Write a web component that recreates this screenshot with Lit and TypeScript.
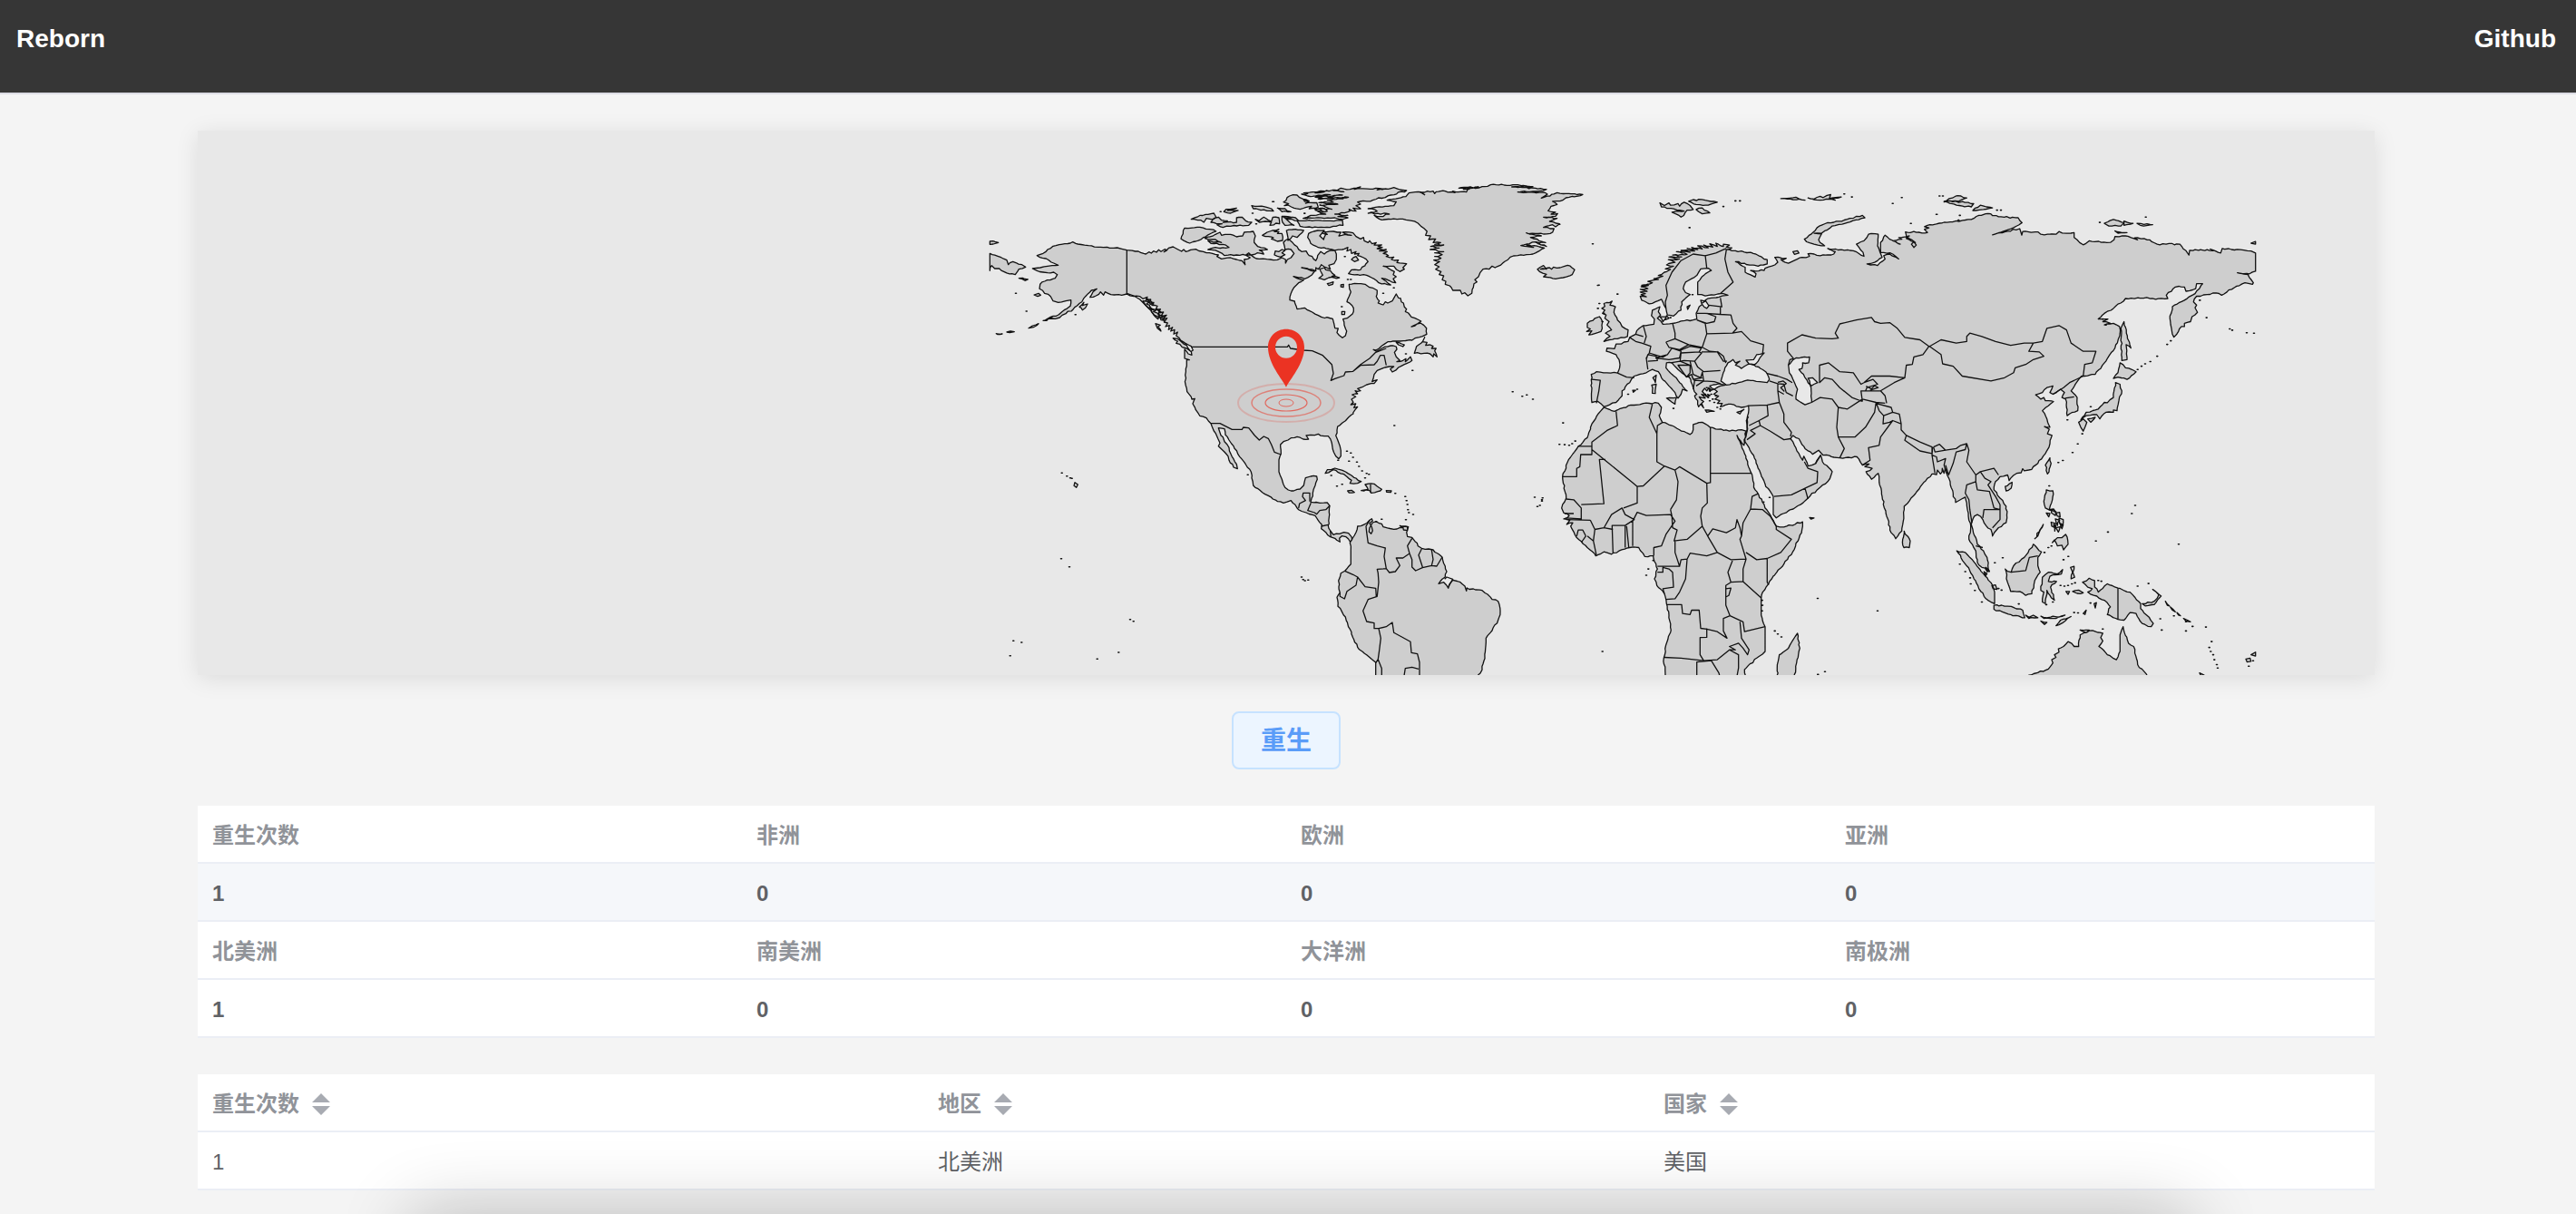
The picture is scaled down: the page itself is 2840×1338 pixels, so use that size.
import { LitElement, html, svg, css } from "lit";
import { customElement, state } from "lit/decorators.js";

/* ---------- Map data ---------- */

// The map is digitised in five sheets; each has an origin on the map and a scale per axis.
type Sheet = [number, number, number, number];
const SHEETS: Record<string, Sheet> = {
  nw: [862, 36, 3, 3],
  n: [1182, 36, 3, 3],
  sw: [1062, 276, 3, 3],
  e: [1482, 36, 3, 2.751],
  fe: [1882, 36, 3, 2.751],
};

// A trace is a list of x,y pairs; a sheet name switches the sheet for the pairs after it.
const LANDS: string[] = [
  // North and Central America
  `nw 190,305 210,298 225,285 243,274 270,268 300,264 308,260 325,267 360,272 400,277 430,280 455,279 470,283 487,287 515,291 550,300 560,293 568,297 575,290 585,294 592,286 600,292 612,284 618,286 610,293 625,280 640,276 655,284 668,291 675,285 682,292 690,290 698,286 715,284 740,292 770,298 790,303 785,308 800,316 830,312 850,318 868,322 878,335 875,318 895,312 880,304 890,296 898,304 915,315 950,317 985,319 1000,312 1012,318 1012,330 1018,318 1030,312 1040,298 1030,285 1010,285 1005,262 1020,250 1035,262 1050,275 1065,292 1080,290 1090,305 1100,308 1112,322 1118,305 1128,292 1140,300 1155,290 1175,288 1180,300 1180,318 1172,332 1155,337 1160,350 1140,342 1130,335 1120,350 1112,345 1112,356 1085,348 1065,345 1085,350 1108,357 1098,370 1075,382 1055,378 1038,374 1060,384 1072,386 1055,395 1040,410 1030,430 1026,452 1042,456 1050,482 1075,478 1100,492 1130,508 1168,514 1172,530
   n 215,545 226,546 222,560 240,577 250,570 254,555 246,535 242,515 265,505 277,490 272,470 255,458 262,440 268,425 262,400 280,397 315,400 340,412 355,420 352,440 362,455 358,462 375,468 382,458 390,462 405,455 418,432 425,445 432,446 435,458 442,462 445,475 452,482 448,490 458,495 468,508 480,512 500,522 488,530 468,540 498,528 518,545 519,565 505,572 480,578 470,585 430,588 390,590 370,604 350,618 342,616 352,622 370,612 400,603 418,606 420,615 412,625 418,640 430,652 420,656 440,652 450,646 448,656 465,640 470,652 445,665 425,675 405,690 398,680 410,672 395,672 380,675 355,685 345,698 342,712 338,722 355,716 345,728 335,728 320,732 305,740 290,745 300,752 282,752 290,762 272,765 284,772 270,780 276,790 268,798 284,795 278,808 290,805 282,815 275,825
   sw 636,108 620,120 600,138 584,150 578,180 588,205 595,230 595,248 588,257 578,248 568,225 565,205 553,182 540,182 520,175 495,178 480,180 488,192 470,192 450,184 430,188 420,195 405,200 395,210 397,240 390,260 390,300 400,325 410,352 430,363 460,357 472,345 478,320 495,315 515,315 517,325 510,345 502,370 498,388 495,400 525,403 550,402 558,412 556,450 553,478 560,495 570,508 590,505 605,500 620,503 630,515 632,524 626,532 612,515 598,512 590,520 592,532 575,520 560,515 545,500 530,488 532,475 510,445 480,435 455,425 430,395 405,403 370,390 335,368 305,345 300,320 298,300 280,275 260,250 240,215 225,195 213,178 210,158 190,155 195,170 205,185 210,200 225,220 235,250 250,275 253,290 240,285 225,262 215,240 200,225 190,215 195,205 188,190 175,165 165,140
   nw 750,842 728,835 715,815 705,795 712,778 702,780 700,772 686,755 682,735 680,700 685,670 685,650 694,650 678,645 678,615 690,630 702,634 700,622 706,618 700,605 690,600 665,585 650,570 655,558 642,565 645,550 632,555 638,542 625,550 628,536 615,540 622,528 610,525 620,512 606,515 618,502 600,505 608,492 592,495 598,482 582,484 588,472 570,470 576,460 562,462 566,450 550,452 555,442 540,448 530,440 510,440 487,432 470,436 445,435 425,430 415,425 410,436 400,425 385,438 365,443 375,425 388,415 370,420 350,440 338,458 310,482 285,497 265,510 240,513 215,520 235,508 262,500 280,485 300,472 302,452 285,455 260,460 243,455 235,440 215,430 198,415 200,400 215,390 250,380 257,368 245,360 225,362 210,360 190,355 175,348 200,345 225,340 240,338 260,337 245,330 220,315`,
  // South America
  `sw 632,522 640,510 650,480 670,475 690,460 697,455 700,462 690,470 697,482 700,495 695,505 688,498 690,485 700,468 712,464 730,472 735,482 770,490 800,485 790,478 818,482 812,500 815,514 830,517 840,530 850,545 862,553 885,555 900,558 915,570 930,582 940,612 945,630 940,648 930,655 918,670 935,665 950,685 955,670 965,658 990,665 1005,678 1010,694 1012,684 1040,690 1062,692 1080,705 1095,722 1115,728 1122,760 1115,790 1095,825 1075,850 1073,885 1068,925 1062,955 1045,980 710,980 710,930 680,905 650,880 638,855 625,820 610,780 585,745 582,715 592,700 588,680 587,660 595,635 608,628 628,605 628,560 625,535`,
  // Greenland and Iceland
  `n 325,150 350,145 410,140 418,127 388,122 450,110 460,98 500,95 512,104 495,95 540,92 545,100 550,94 580,92 612,97 605,92 650,95 655,85 625,82 690,78 640,86 720,76 730,71 820,71 870,77 800,78 915,86 880,93 820,95 910,97 918,102 898,115 950,97 1035,103 990,112 960,125 935,126 950,136 930,142 920,157 945,162 930,168 952,166 945,175 905,178 950,182 925,192 958,200 945,210 935,203 905,212 940,216 935,228 905,234 848,230 898,240 885,240 862,245 912,262 880,262 915,275 880,260 830,272 872,278 845,268 908,280 870,300 820,305 795,310 770,330 745,345 735,340 725,350 705,350 695,362 690,375 678,385 685,392 675,398 668,430 655,438 645,428 635,432 630,420 605,420 595,405 580,400 582,390 570,385 575,372 560,368 566,358 548,350 560,342 545,335 562,325 542,320 566,314 545,308 570,302 545,296 575,292 530,285 560,280 532,275 575,270 545,268 565,262 540,262 548,250 525,252 532,240 515,238 520,225 510,215 490,198 470,190 430,184 370,187 345,172 365,176 395,168 325,165 355,158`,
  `n 885,350 905,338 915,350 895,350 925,345 932,350 938,343 960,345 985,337 1008,352 1000,368 970,378 945,382 905,375 915,367 892,358`,
  // Canadian Arctic
  `nw 678,214 720,211 760,218 782,225 740,245 715,258 695,264 666,250`,
  `nw 745,248 780,235 795,228 800,238 830,235 850,243 870,240 875,228 905,225 912,240 908,262 920,275 952,285 925,287 940,300 918,296 900,303 850,303 810,305 790,292 755,285 780,278 825,278 805,268 765,265 755,256 800,262 780,252`,
  `nw 700,185 730,172 775,165 782,178 765,185 750,182 742,195 732,188`,
  `nw 765,195 775,182 790,178 800,188 820,190 805,195 850,195 850,180 868,178 880,190 900,195 890,205 830,208 805,212 785,203 802,200`,
  `nw 815,152 850,148 820,156 855,156 830,165 808,160`,
  `nw 900,140 940,143 965,150 972,158 930,155 905,150`,
  `nw 912,185 925,190 940,178 955,188 965,192 970,178 990,180 992,200 980,198 960,205 965,195 945,192 925,195`,
  `nw 985,148 1010,150 1030,160 1000,160`,
  `nw 935,238 960,225 990,218 975,226 990,226 985,232 1000,232 1002,255 985,258 965,250 972,246 945,242`,
  `nw 1015,222 1045,218 1072,222 1050,245 1035,240 1020,255`,
  `nw 1000,175 1038,178 1012,182 1020,190 1040,205 1010,205 1002,195`,
  `nw 978,290 990,292 1000,285 1010,288 1000,296 1010,302 995,310 975,303`,
  `n 45,128 65,108 90,105 110,118 130,125 118,132 155,130 160,145 130,150 138,142 118,146 100,152 80,148 60,138 48,140 62,134`,
  `n 105,102 125,100 112,98 140,95 180,92 150,98 215,88 245,94 210,90 235,82 265,86 300,78 280,86 350,82 390,85 355,88 410,80 452,90 400,105 340,122 290,128 300,135 285,140 300,150 275,148 285,158 262,152 265,158 215,168 258,172 225,176 258,180 240,186 215,180 180,182 110,182 135,172 185,168 150,155 175,160 160,150 205,152 165,138 225,135 162,130 210,128 190,122 260,112 160,118 240,105 150,112 200,104 125,108`,
  `n 45,178 85,180 95,190 130,188 200,190 240,188 242,205 180,212 130,210 100,208 90,190 60,185`,
  `n 125,245 128,232 145,225 180,222 165,240 178,252 185,235 172,230 190,235 178,226 210,225 235,228 228,240 250,235 270,238 240,228 275,230 285,242 300,250 310,245 312,256 325,262 330,256 338,266 352,262 345,270 370,270 358,275 372,278 355,282 385,285 362,290 388,292 375,298 392,305 385,308 410,310 402,318 425,320 420,328 452,332 440,345 445,350 430,358 410,340 375,340 400,352 412,358 408,368 418,375 408,382 416,395 395,388 370,380 400,402 360,395 320,370 290,368 260,365 270,352 300,352 325,325 310,312 290,305 295,298 280,300 285,292 270,298 268,285 255,290 258,278 240,285 205,285 160,278 135,265`,
  `n 165,350 180,345 185,352 200,355 215,370 205,374 230,378 195,378 180,385 162,380 175,370`,
  `n 190,398 210,392 208,400 195,404`,
  `n 235,402 244,400 243,410 235,408`,
  `n 270,318 285,308 293,320 280,325`,
  `n 238,490 248,490 247,500 238,500`,
  `n 512,575 505,590 520,592 515,602 530,600 540,605 535,612 550,612 545,620 553,640 542,630 540,640 530,630 510,628 478,628 485,605 500,595`,
  `n 418,592 445,600 440,606 425,600`,
  `n 110,118 125,124 115,126`,
  `n 148,150 175,148 190,158 160,160`,
  // North Pacific
  `nw 640,578 655,580 665,588 685,602 690,612 698,622 685,612 670,608 662,598 650,595 655,588`,
  `nw 582,530 598,535 590,540 600,555 588,545`,
  `nw 540,455 560,460 552,465 575,485 560,480 548,468`,
  `nw 562,475 585,485 575,490 595,500 590,515 575,500`,
  `nw 590,500 612,505 600,510 612,520 600,518`,
  `nw 585,480 605,495 595,492`,
  `nw 550,445 575,465 565,466`,
  `nw 330,475 345,460 340,470 357,465 350,478 340,485 336,478`,
  `nw 162,545 175,537 195,530 178,542`,
  `nw 210,520 228,512 240,508 222,520`,
  `nw 90,558 102,555 115,557 100,560`,
  `nw 55,563 75,564 60,566`,
  `nw 34,298 60,307 90,320 95,335 110,325 140,335 152,343 130,350 118,368 80,358 65,348 50,348 40,338 34,355`,
  `nw 34,258 62,262 45,267 34,268`,
  `nw 130,380 160,384 150,388`,
  `nw 180,435 195,430 202,436 192,440`,
  `nw 315,1055 325,1062 320,1072 312,1066`,
  // Caribbean
  `sw 543,305 550,293 575,288 600,295 630,312 662,332 650,338 625,338 630,328 605,308 570,293`,
  `sw 662,362 685,358 675,342 705,340 715,348 730,358 725,363 695,370 690,362`,
  `sw 617,363 630,361 640,368 622,369`,
  `sw 745,362 762,363 760,368 746,367`,
  `sw 800,480 815,482 815,494 802,492`,
  // Eurasia
  `e 163,640 180,632 215,635 250,636 258,610 255,595 245,580 213,570 215,560 240,562 245,548 262,548 285,540 290,528 310,518 322,500 335,492 355,490 370,488 372,472 362,462 365,445 390,435 385,450 392,460 382,470 400,488 432,485 460,478 500,475 512,472 510,455 520,435 530,428 545,440 552,432 540,415 560,408 615,400 600,395 540,402 515,398 515,360 535,340 560,325 550,318 525,320 512,340 475,360 467,380 475,392 490,398 462,420 460,445 445,455 435,463 415,460 410,440 395,412 375,420 355,426 330,415 325,403 345,405 328,398 342,395 325,390 348,388 325,382 350,380 328,374 352,370 330,370 365,362 350,358 385,352 370,350 400,342 385,340 405,330 425,322 408,320 435,312 412,308 440,300 418,292 455,290 420,284 462,284 432,278 480,276 445,268 490,270 460,264 505,266 480,258 515,262 495,255 530,260 515,250 550,256 535,248 565,254 555,244 580,252 575,242 600,252 600,245 620,248 610,254 628,256 610,262 640,265 690,270 745,292 745,305 715,312 640,298 672,315 672,330 690,338 705,345 708,335 690,325 735,325 738,318 770,308 780,300 770,285 808,288 790,292 815,303 860,285 885,282 880,274 900,275 920,280 965,275 970,268 945,258 990,262 1030,265 1065,282 1062,270 1040,245 1065,235 1080,215 1112,215 1110,250 1118,270 1125,285 1100,300 1075,305 1110,310 1135,290 1130,280 1150,275 1180,290 1160,275 1120,270 1120,240 1135,218 1150,230 1185,245 1160,235 1190,230 1180,225 1215,220 1205,228 1235,240 1205,225 1202,208 1275,210
   fe 70,205 65,200 80,196 65,192 75,188 150,178 220,170 245,158 275,152 310,162 375,165 388,180 360,195 290,217 330,208 380,198 387,218 390,207 440,208 450,215 500,215 510,207 535,212 560,210 560,225 570,232 590,247 610,235 650,240 680,240 692,232 695,222 730,220 770,232 760,226 810,232 835,245 910,245 930,265 940,278 942,264 960,262 1020,265 1010,260 1045,272 1050,258 1110,262 1145,266 1160,272 1160,327 1140,335 1100,332 1135,337 1145,352 1153,362 1150,367 1125,362 1090,377 1048,400 1030,393 1000,398 965,403 955,420 965,430 960,438 968,452 950,465 945,480 925,485 925,495 915,495 905,510 890,527 882,500 877,470 885,435 925,415 960,395 985,365 965,365 962,380 930,388 925,375 895,375 865,400 870,410 830,412 800,407 730,410 690,440 660,455 640,472 672,472 655,480 680,485 660,490 690,485 710,495 712,515 695,560 665,600 630,640 595,645 585,645 570,662 550,690 570,710 572,750 537,765 535,740 532,715 520,710 528,695 515,685 490,700 480,695 490,675 470,680 455,695 433,702 450,715 460,710 465,720 492,722 475,735 455,750 470,775 480,800 462,798 478,806 472,820 487,825 480,850 465,880 440,910 420,928 395,932 390,926 385,938 370,940 350,955 345,962 340,945 315,950 300,965 295,990 315,1015 335,1040 338,1075 335,1090 305,1110 290,1130 285,1110 270,1100 258,1080 240,1065 230,1070 220,1095 225,1110 235,1135 240,1155 260,1175 272,1195 275,1220 280,1238 255,1225 240,1210 235,1175 212,1140 218,1100 210,1060 205,1030 200,1012 180,1022 168,1028 160,1000 150,965 140,945 134,925 130,940 124,925 118,942 108,930 105,944 95,942
   e 1290,942 1275,955 1240,995 1210,1030 1198,1040 1195,1085 1190,1115 1170,1138 1155,1120 1140,1070 1125,1010 1115,960 1112,940 1090,958 1072,935 1092,925 1068,920 1082,912 1060,915 1042,890 985,893 930,885 915,870 895,882 870,865 850,835 830,825 822,835 835,855 850,880 862,900 866,888 880,918 905,910 922,885 928,905 960,935 945,965 910,990 880,1015 855,1035 775,1075 765,1065 765,1010 740,980 715,925 700,885 680,855 672,845 678,800 680,765 683,735 660,740 625,730 590,738 596,728 580,728 588,720 572,715 584,706 568,700 580,692 570,685 590,675 607,672 585,668 555,675 570,685 560,688 552,680 545,690 538,682 530,692 545,705 528,700 540,712 520,708 535,722 528,728 535,742 525,730 518,738 515,720 505,705 512,700 500,680 492,655 470,640 450,625 430,605 412,605 410,620 430,640 455,665 480,690 465,685 460,700 450,712 440,695 420,675 395,650 385,632 365,625 345,635 305,645 290,665 265,690 265,705 245,725 205,738 185,722 165,725`,
  // Africa and Madagascar
  `e 205,740 240,752 285,735 335,728 385,727 395,740 388,765 398,785 430,795 455,808 490,822 500,808 500,792 530,785 555,800 620,812 660,808 675,812 668,855 650,835 645,825 670,880 690,935 705,990 735,1035 760,1075 775,1100 800,1103 862,1087 860,1110 835,1170 800,1215 760,1260 730,1300 725,1320 725,1370 738,1405 738,1480 710,1500 670,1535 675,1580 410,1580 403,1500 410,1460 427,1415 420,1370 412,1335 405,1305 380,1280 372,1260 382,1230 368,1190 340,1192 320,1165 290,1165 230,1185 205,1178 178,1190 150,1165 115,1135 95,1100 102,1090 82,1095 92,1082 72,1078 90,1068 72,1060 65,1045 80,1015 68,950 85,905 120,858 150,832 165,790 200,745`,
  `e 845,1425 853,1470 835,1550 828,1580 780,1580 778,1530 785,1490 815,1470 830,1445`,
  `e 1198,1115 1218,1145 1215,1165 1197,1165 1193,1140`,
  `e 885,1074 900,1075 890,1079`,
  // Europe, islands
  `e 205,425 232,418 225,430 243,435 238,452 250,475 265,495 285,505 283,525 250,532 205,540 225,525 210,515 230,505 215,490 222,480 208,470 212,460 200,455 208,445 198,440 208,434`,
  `e 150,485 175,470 190,465 200,480 195,510 155,520 165,508 148,510 160,502 150,498`,
  `e 412,712 445,710 440,730`,
  `e 363,672 378,670 375,698 365,697`,
  `e 367,650 378,642 375,665`,
  `e 540,748 570,752 545,755`,
  `e 645,755 668,746 655,760`,
  `e 390,465 412,465 400,480`,
  `e 412,462 420,470 408,474`,
  `e 480,435 490,430 482,443`,
  `e 525,415 540,418 528,425`,
  `e 300,688 310,688 302,694`,
  `e 552,684 560,686 556,692`,
  `e 548,700 556,704 550,706`,
  `e 536,698 548,708 542,706`,
  // Arctic Russia and Svalbard
  `e 390,120 405,128 420,120 425,127 450,122 455,130 470,118 490,128 500,140 480,142 460,163 430,148 470,145 455,142 395,132`,
  `e 485,115 500,110 540,112 580,118 550,127 510,125`,
  `e 510,140 530,135 555,150 530,153`,
  `e 790,107 840,103 870,112 850,108 830,110`,
  `e 880,105 900,108 920,100 930,104 955,95 950,108 990,102 960,108 970,112 940,108 920,112`,
  `e 868,230 890,215 910,195 945,180 1000,172 1060,158 1068,165 1010,180 960,190 925,212 900,212 925,214 915,232 935,250 900,245 875,238`,
  `e 830,268 845,265 850,272 835,276`,
  `fe 130,115 175,98 205,105 185,112 130,117 150,114 228,122 220,132 180,128`,
  `fe 225,143 250,127 290,135 260,140`,
  `fe 660,182 690,170 725,180 715,190 675,190`,
  `fe 725,175 755,182 725,188`,
  `fe 768,182 820,186 790,190`,
  `fe 695,205 735,210 705,212`,
  `fe 1145,242 1160,237 1160,245`,
  `fe 22,245 30,238 38,248 30,255`,
  // East Asia
  `fe 715,500 725,480 733,515 748,560 732,550 735,595 718,598`,
  `fe 712,605 730,620 765,632 735,655 705,648 690,652 705,635`,
  `fe 697,665 712,670 718,690 708,720 702,750 690,748 690,755 665,755 645,775 635,762 600,765 582,778 600,755 640,745 660,725 670,726 690,710`,
  `fe 575,785 590,775 602,785 596,800 590,812 582,800`,
  `fe 605,775 630,770 615,785`,
  `fe 480,893 484,910 472,942 465,915`,
  `fe 332,980 355,967 352,985 335,993`,
  // Philippines
  `fe 468,990 490,993 488,1020 478,1050 492,1048 500,1058 480,1052 465,1045 460,1025`,
  `fe 488,1150 505,1135 520,1135 532,1125 540,1155 525,1172 520,1158 505,1160 495,1142`,
  `fe 485,1052 500,1056 498,1068 485,1060`,
  `fe 500,1060 512,1058 514,1072 505,1070`,
  `fe 484,1088 498,1092 496,1104 486,1100`,
  `fe 498,1078 512,1082 505,1098`,
  `fe 510,1075 524,1080 520,1100 512,1092`,
  `fe 500,1105 514,1102 508,1118`,
  `fe 492,1095 500,1098 496,1115`,
  `fe 514,1092 524,1096 520,1108`,
  `fe 468,1060 480,1062 476,1072`,
  `fe 430,1138 458,1095 440,1130`,
  // Indonesia and Oceania
  `fe 172,1175 200,1180 230,1210 265,1250 290,1280 297,1300 297,1335 275,1325 245,1290 215,1235`,
  `fe 295,1340 340,1343 390,1355 397,1378 350,1368 295,1352`,
  `fe 332,1230 352,1240 360,1220 395,1195 425,1155 452,1178 440,1195 440,1220 448,1240 430,1265 420,1305 400,1310 380,1298 350,1298 340,1270`,
  `fe 455,1255 475,1240 505,1245 522,1232 518,1245 480,1252 475,1268 502,1268 482,1285 495,1325 480,1310 470,1295 465,1335 455,1330 460,1300 450,1295`,
  `fe 288,1280 300,1278 305,1292 292,1290`,
  `fe 548,1225 560,1222 556,1240 562,1255 550,1260 555,1240`,
  `fe 533,1298 545,1298 540,1307`,
  `fe 555,1298 575,1294 590,1302 570,1304`,
  `fe 450,1388 470,1392 462,1398`,
  `fe 400,1370 412,1376 425,1370 440,1378 410,1380`,
  `fe 450,1373 470,1378 490,1373 510,1376 530,1370 500,1380 460,1380`,
  `fe 500,1402 515,1385 550,1374 530,1388`,
  `fe 590,1365 600,1355 596,1368`,
  `fe 626,1335 634,1332 630,1348`,
  `fe 262,1238 272,1244 268,1250`,
  `fe 268,1225 280,1236 272,1238`,
  `fe 588,1270 610,1258 628,1265 628,1285 640,1300 670,1275 705,1288 745,1300 780,1335 780,1350 800,1370 822,1395 815,1405 785,1395 765,1365 745,1362 725,1385 705,1383 670,1368 680,1345 660,1325 625,1310 605,1300 620,1290 605,1285`,
  `fe 785,1335 825,1328 840,1308 820,1292 848,1312 825,1338 795,1342`,
  `fe 862,1328 875,1342 868,1340`,
  `fe 878,1345 895,1360 884,1354`,
  `fe 900,1362 912,1372 905,1370`,
  `fe 922,1380 945,1390 930,1388`,
  `fe 580,1415 610,1415 600,1423`,
  `fe 410,1552 475,1533 490,1515 486,1505 500,1498 495,1490 510,1482 508,1472 525,1465 540,1450 560,1465 575,1465 580,1430 610,1417 655,1425 648,1438 655,1448 642,1465 670,1490 700,1505 712,1480 712,1430 722,1405 740,1455 757,1465 770,1520 800,1550 800,1580 410,1580`,
  `fe 1128,1503 1142,1500 1145,1510 1132,1512`,
  `fe 1145,1490 1160,1482 1160,1494`,
  `fe 975,1545 990,1552 980,1555`,
];

const WATERS: string[] = [
  `e 592,660 605,620 615,605 632,595 640,605 655,600 640,612 660,622 680,610 700,610 740,632 752,655 745,665 720,662 680,657 650,665 610,672`,
  `e 675,597 700,595 710,580 735,575 715,600 700,612 685,608`,
  `e 815,612 840,590 885,587 882,605 862,605 860,622 850,625 865,640 880,665 890,680 892,725 870,732 840,715 845,685 830,655 818,635`,
  `e 880,652 895,650 912,665 890,675`,
];

const BORDERS: string[] = [
  // Americas
  `nw 487,287 487,432`,
  `nw 487,430 510,438 530,450 550,470 565,485 578,502 600,512`,
  `nw 700,607 955,607 1018,607 1022,601 1028,612 1070,618 1100,620 1135,635 1165,665 1170,695 1162,718 n 215,712 245,702 250,690 275,688 300,668 345,666 355,655 365,635 378,635 385,668`,
  `n 275,688 300,665 330,645 350,625 385,612`,
  `sw 165,140 195,140 235,160 268,160 272,153 290,155 310,180 325,195 340,183 355,190 365,210 375,235 397,243`,
  `sw 455,420 458,405 478,395 468,382 470,370 492,370 492,398`,
  `sw 496,403 485,428 508,435 515,440 525,428 545,425 558,412`,
  `sw 530,480 553,475`,
  `sw 560,495 562,515`,
  `sw 693,342 693,368`,
  `sw 690,460 678,480 680,500 685,535 715,545 742,552 738,580 745,620 755,633 775,630 790,610 778,585 800,585 822,570 815,545 830,520`,
  `sw 822,570 830,590 830,615 842,627 865,617 895,610 900,590 895,558`,
  `sw 862,555 852,575 865,615`,
  `sw 895,610 912,612 930,582`,
  `sw 745,620 715,622 718,635 720,665 715,712 685,722 668,760 680,795 705,800 705,818 720,818 745,812 765,798 770,832 795,845 825,862 828,898 848,902 855,930 855,980`,
  `sw 608,628 635,640 650,648 675,680 710,685 712,712`,
  `sw 650,648 645,675 615,695 607,720 592,712 592,700`,
  `sw 720,818 727,850 722,890 718,920 710,932`,
  `sw 718,920 730,950 730,980`,
  `sw 803,980 808,950 830,946 852,952`,
  `sw 938,655 945,648 965,655 950,680`,
  // Europe
  `e 165,655 193,658 188,690 180,727`,
  `e 250,636 280,648 305,650`,
  `e 290,528 310,540 330,545 360,555 355,575 345,590 350,625`,
  `e 335,492 345,525 338,545`,
  `e 310,518 335,525`,
  `e 432,485 440,515 440,532`,
  `e 355,575 400,588 415,580`,
  `e 410,542 440,532 485,550 455,565 420,558 410,542`,
  `e 485,550 530,558 545,517 540,485 512,475`,
  `e 375,590 415,580 430,560 460,570 455,590 420,595 375,590`,
  `e 345,595 350,580 378,585 382,598 350,600`,
  `e 455,568 490,555 527,560 520,572 460,575`,
  `e 457,600 460,575 520,572 528,575 505,600 470,598 457,600`,
  `e 528,572 580,572 600,600 612,600`,
  `e 580,570 600,585 608,605`,
  `e 505,600 515,618 535,632 590,628`,
  `e 530,632 535,660 570,662 590,668`,
  `e 490,600 500,640 525,650 530,635`,
  `e 425,605 457,600 490,612 490,635 478,648 450,612 490,612`,
  `e 495,645 505,660 500,685`,
  `e 505,658 535,660 510,675`,
  `e 478,648 495,640 500,655 530,650`,
  `e 410,440 408,420 415,400 410,370 430,330 460,295 500,275 540,280 575,272 600,262 610,258`,
  `e 540,278 545,318`,
  `e 610,262 605,290 615,330 632,360 590,395`,
  `e 590,408 595,435 552,430`,
  `e 590,435 590,458 540,455 512,455`,
  `e 545,455 575,465 570,480 545,485 512,475`,
  `e 590,458 625,460 632,485 645,500 630,515 545,517`,
  `e 630,515 660,510 690,538 733,550 730,575`,
  `e 530,558 555,570 580,572`,
  // Central and West Asia
  `e 815,612 820,595 832,592 812,570 812,545 860,520 905,530 960,532 980,530 970,515 985,487 1040,475 1090,467 1100,480 1120,485 1150,483 1175,500 1200,528 1250,535 1280,555 1260,580 1230,587 1225,610 1205,612 1200,650 1150,645 1090,645 1065,665 1055,670 1030,635 985,632 948,605 918,612 918,665 935,650 960,655 985,680 1025,710 1060,722`,
  `e 892,725 920,710 960,715 980,740 1010,745 1060,715 1105,725 1135,727`,
  `e 980,740 975,800 980,830 1000,865 985,893`,
  `e 980,830 1035,830 1070,800 1100,755 1105,725`,
  `e 1060,722 1055,690 1120,690 1135,705 1140,727`,
  `e 1065,665 1095,655 1110,670 1075,680 1070,690 1120,690 1165,665 1200,650`,
  `e 1072,676 1090,684 1100,674 1112,680 1085,688`,
  `e 735,635 780,645 810,655 828,665`,
  `e 752,660 780,668 800,670 808,695 830,705`,
  `e 780,668 780,690 800,700`,
  `e 780,664 798,660 808,668 790,680 802,692`,
  `e 683,735 745,733 785,725 780,690`,
  `e 745,733 748,765 718,780 685,795`,
  `e 785,725 800,760 800,785 825,815 822,828`,
  `e 718,780 722,795 755,812 800,838 822,835`,
  `e 722,795 690,810 705,820 678,838`,
  `e 683,768 676,780 680,805 674,830`,
  `e 768,1010 825,1005 870,985 880,1018`,
  `e 870,985 910,968 912,935 880,925 868,905`,
  `e 905,910 922,885`,
  `e 1105,725 1115,750 1130,765 1128,790 1150,785 1160,780 1120,830 1115,855 1080,862 1085,900 1060,915`,
  `e 1105,728 1155,740 1160,755 1130,765`,
  `e 1160,755 1182,760 1188,790 1160,780`,
  `e 1188,790 1188,808 1205,825 1250,845 1290,860 1290,880 1250,872 1200,840 1205,825`,
  // East and South-East Asia
  `fe 90,885 105,890 108,905 135,895 130,915 138,940`,
  `fe 92,860 90,885 100,940`,
  `fe 95,860 115,852 135,870 100,875 95,860`,
  `fe 135,870 170,865 185,855 205,850 200,868 170,875 160,910 145,945 135,915`,
  `fe 205,850 212,870 205,905 235,945 250,935 295,925 310,945`,
  `fe 235,965 205,975 200,1000 212,1020 215,1050 222,1090`,
  `fe 235,945 235,965 240,990 280,995 295,1045 315,1050`,
  `fe 250,935 265,955 285,965 275,975 300,1010 315,1035 315,1080 290,1105`,
  `fe 258,1075 262,1050 315,1050`,
  `fe 235,1160 258,1165`,
  `fe 352,1240 400,1235 412,1195 440,1190`,
  `fe 705,1288 705,1383`,
  `fe 82,555 120,535 170,545 205,540 205,525 215,515 255,525 300,540 350,552 395,545 425,545 410,570 445,572 460,585 425,595 400,610 365,620 360,635 330,650 285,660 190,645 160,615 125,608 120,580 82,555`,
  `fe 425,545 455,540 470,500 510,492 535,505 550,545 590,570 632,570 620,605 595,610 590,645`,
  `fe 490,700 525,680 545,665 590,645`,
  `fe 530,712 560,708`,
  // Africa
  `e 245,752 250,795 215,810 165,845 165,883 128,883 125,920 115,925 115,950 68,950`,
  `e 120,858 165,858`,
  `e 165,868 300,968 315,980 335,978 405,918 380,905 380,820 355,770 365,730`,
  `e 210,898 190,898 205,1032 130,1035`,
  `e 315,980 315,1030 270,1045`,
  `e 380,820 382,795 400,785`,
  `e 557,800 557,968 545,970`,
  `e 557,940 693,940`,
  `e 405,918 440,930 455,920 545,970 547,1030 530,1045 525,1070 530,1100`,
  `e 440,930 450,965 445,1020 425,1050`,
  `e 300,1085 315,1058 345,1068 425,1065 440,1085 410,1125 395,1160 370,1165 370,1190`,
  `e 300,1085 300,1160`,
  `e 280,1100 287,1165`,
  `e 275,1098 275,1165`,
  `e 205,1105 230,1065 265,1045 275,1065 305,1080 275,1098 232,1098 235,1180`,
  `e 160,1082 175,1110 205,1105 235,1110`,
  `e 175,1110 170,1145 180,1188`,
  `e 150,1130 170,1145`,
  `e 115,1130 120,1112 135,1112 145,1130 130,1150`,
  `e 80,1080 160,1082`,
  `e 80,1018 105,1020 130,1045 130,1078 80,1075`,
  `e 75,1062 105,1062`,
  `e 425,1050 430,1070 432,1105 447,1112 437,1145 480,1140 530,1100 548,1130 580,1180 545,1190 490,1182 480,1200 460,1202 455,1222 440,1180 440,1145`,
  `e 548,1130 565,1108 610,1120 640,1105 645,1080 655,1105 660,1130 655,1140 675,1200 625,1202 580,1180`,
  `e 660,1130 665,1090 690,1048 730,1050 755,1070 775,1100 775,1110 825,1140 790,1180 745,1198 710,1202 675,1180`,
  `e 690,1048 695,1010 715,1002`,
  `e 745,1198 745,1270 750,1278`,
  `e 675,1200 665,1230 665,1268 625,1270 615,1240 630,1205`,
  `e 665,1268 725,1318`,
  `e 625,1270 608,1280 608,1340 622,1372 600,1380 600,1418 612,1440 580,1420 545,1412 525,1410 520,1355 495,1355 490,1368 465,1365 462,1338 412,1338`,
  `e 608,1290 625,1288 618,1310 608,1315`,
  `e 480,1200 475,1260 455,1300 440,1320 410,1322`,
  `e 382,1222 455,1222`,
  `e 382,1240 400,1240 400,1225 420,1230 432,1240 435,1285 400,1290 405,1305`,
  `e 622,1372 665,1390 670,1420 738,1405`,
  `e 655,1390 660,1440 685,1475 680,1490 665,1470 650,1455 620,1465 640,1475 620,1475 580,1505 535,1508 460,1500 403,1498`,
  `e 545,1410 545,1437 523,1438 523,1490 535,1508`,
  `e 620,1475 650,1490 650,1530 640,1580`,
  `e 512,1580 512,1512 560,1508 585,1545 595,1580`,
];

// Islands too small for an outline.
const DOTS: string[] = [
  `nw 120,430 155,489 272,1024 289,1034 305,1042 300,1040 317,500 887,1030 970,127 797,160 915,200 903,165 1075,165`,
  `n 12,127 375,430 238,474 258,384 268,384 248,308 472,685 803,755 835,770 850,766 870,780 1068,266 1088,403 1150,432 450,630 410,412 958,202 115,166`,
  `sw 287,310 615,232 628,238 622,265 635,252 648,268 655,282 665,297 680,305 675,320 688,308 563,312 582,347 599,341 775,371 808,382 812,395 815,408 817,425 820,435 834,441 810,458 712,465 730,457 772,147 1236,384 1262,386 1260,397 1253,411 1245,415 465,648 470,656 476,660 487,658 586,262`,
  `nw 270,1307 297,1334 101,1628 112,1579 139,1584 498,1508 509,1514 389,1639 460,1617`,
  `e 70,787 58,852 75,853 90,855 100,850 110,842 0,1020 168,244 185,370 250,397 190,425 185,440 285,700 315,685 435,743 488,195 600,131 640,114 655,114 1000,93 1025,102 1160,122 1190,104 1220,182 1305,155 728,1325 729,1340 728,1357 770,1418 780,1427 792,1436 912,1319 1110,1357 200,1480 352,1230 345,1249 368,1204 913,1550 936,1541 545,680 555,690 560,700 550,710 565,715 575,705 570,725 555,720 540,700 590,745 580,740 733,1027 753,1013 200,480 205,455 425,468 498,398`,
  `fe 106,155 115,99 126,99 182,158 178,172 305,142 318,142 645,179 797,163 976,415 998,468 1075,502 1083,506 1131,514 1155,515 868,549 880,538 835,585 812,601 795,608 783,615 770,625 655,472 665,490 538,778 615,738 587,820 572,851 555,877 508,907 523,901 478,978 762,1037 751,1062 672,1118 632,1145 906,1155 462,1180 475,1165 485,1160 525,1202 541,1192 324,1196 298,1211 182,1215 200,1238 216,1257 218,1275 232,1295 255,1330 320,1294 377,1336 310,1289 265,1245 515,1280 528,1282 540,1280 553,1275 563,1272 614,1333 640,1265 650,1267 770,1282 806,1274 845,1381 850,1415 930,1418 996,1406 1015,1450 1007,1468 1012,1480 1020,1490 1024,1505 1032,1520 1035,1530 1138,1525 1152,1508 890,1372 930,1390 952,1404 655,1412 573,1363 560,1362 468,1338 490,1330`,
];

interface Point {
  x: number;
  y: number;
}

const parseTrace = (trace: string): Point[] => {
  let sheet = SHEETS.nw;
  const points: Point[] = [];
  for (const token of trace.split(/\s+/)) {
    if (SHEETS[token]) {
      sheet = SHEETS[token];
    } else if (token) {
      const [x, y] = token.split(",").map(Number);
      points.push({ x: sheet[0] + x / sheet[2], y: sheet[1] + y / sheet[3] });
    }
  }
  return points;
};

// Repeatable pseudo-random offset in -0.5..0.5, keyed on position.
const noise = (x: number, y: number): number => {
  const n = Math.sin(x * 12.9898 + y * 78.233) * 43758.5453;
  return n - Math.floor(n) - 0.5;
};

// Breaks long coast segments into short, slightly uneven ones; vertical and very long ones stay straight.
const weather = (points: Point[], amount: number): Point[] => {
  const out: Point[] = [];
  points.forEach((a, i) => {
    const b = points[(i + 1) % points.length];
    const length = Math.hypot(b.x - a.x, b.y - a.y);
    out.push(a);
    if (a.x === b.x || length > 60) return;
    const steps = Math.floor(length / 3);
    for (let s = 1; s < steps; s++) {
      const x = a.x + ((b.x - a.x) * s) / steps;
      const y = a.y + ((b.y - a.y) * s) / steps;
      out.push({ x: x + noise(x, y) * amount, y: y + noise(y, x) * amount });
    }
  });
  return out;
};

const toPath = (points: Point[], closed: boolean): string =>
  "M" + points.map((p) => `${p.x.toFixed(1)} ${p.y.toFixed(1)}`).join("L") + (closed ? "Z" : "");

const landPath = LANDS.map((t) => toPath(weather(parseTrace(t), 1.6), true)).join("");
const waterPath = WATERS.map((t) => toPath(weather(parseTrace(t), 1.2), true)).join("");
const borderPath = BORDERS.map((t) => toPath(parseTrace(t), false)).join("");
const dotPath = DOTS.flatMap(parseTrace)
  .map((p) => `M${(p.x - 0.5).toFixed(1)} ${p.y.toFixed(1)}h1`)
  .join("");

@customElement("world-map")
export class WorldMap extends LitElement {
  static styles = css`
    :host {
      display: block;
      background: #e8e8e8;
      box-shadow: 0 4px 24px rgba(0, 0, 0, 0.1);
    }
    .map {
      display: block;
      width: 100%;
      height: auto;
    }
    .land,
    .water,
    .border,
    .dot {
      stroke: #111;
      stroke-width: 1.3;
      stroke-linejoin: round;
    }
    .land {
      fill: #cecece;
    }
    .water {
      fill: #e8e8e8;
    }
    .border {
      fill: none;
    }
    .dot {
      fill: none;
      stroke-width: 1.6;
      stroke-linecap: round;
    }
    .pin {
      fill: #eb3323;
    }
    .ripple {
      fill: none;
      stroke: #eb3323;
    }
  `;

  render() {
    const ripples = [
      { rx: 8, ry: 4, width: 1, opacity: 0.65 },
      { rx: 23, ry: 9, width: 1.2, opacity: 0.65 },
      { rx: 38, ry: 15, width: 1.5, opacity: 0.5 },
      { rx: 53, ry: 21, width: 2, opacity: 0.2 },
    ];
    return html`
      <svg class="map" viewBox="0 0 2400 600" role="img" aria-label="世界地图">
        <path class="land" d=${landPath}></path>
        <path class="border" d=${borderPath}></path>
        <path class="water" d=${waterPath}></path>
        <path class="dot" d=${dotPath}></path>
        ${ripples.map(
          (r) => svg`<ellipse class="ripple" cx="1200" cy="300" rx=${r.rx} ry=${r.ry}
            stroke-width=${r.width} stroke-opacity=${r.opacity}></ellipse>`,
        )}
        <path
          class="pin"
          fill-rule="evenodd"
          d="M1200 282.700C1196 274 1180 257 1180 238.700C1180 227 1189 218.700 1200 218.700S1220 227 1220 238.700C1220 257 1204 274 1200 282.700ZM1200 226.700a12 12 0 1 0 0 24a12 12 0 1 0 0-24Z"
        ></path>
      </svg>
    `;
  }
}

/* ---------- Page ---------- */

interface Rebirth {
  index: number;
  region: string;
  country: string;
}

type SortKey = keyof Rebirth;

@customElement("app-root")
export class AppRoot extends LitElement {
  static styles = css`
    :host {
      display: block;
      position: relative;
      min-height: 100vh;
      box-sizing: border-box;
      background: #f4f4f4;
      color: #606266;
      font-family: "Liberation Sans", "Noto Sans CJK SC", sans-serif;
      font-size: 24px;
      line-height: 32px;
    }
    .header {
      display: flex;
      justify-content: space-between;
      align-items: flex-start;
      height: 102px;
      box-sizing: content-box;
      padding: 0 22px 0 18px;
      background: #363636;
      border-bottom: 2px solid #dcdce4;
    }
    .brand,
    .link {
      color: #fff;
      font-size: 28px;
      font-weight: 700;
      line-height: 86px;
      text-decoration: none;
    }
    .main {
      display: flex;
      flex-direction: column;
      gap: 40px;
      max-width: 2400px;
      margin: 0 auto;
      padding: 40px 222px 26px 218px;
    }
    .reborn {
      align-self: center;
      width: 120px;
      height: 64px;
      padding: 2px 0 0;
      color: #5a9cf8;
      background: #ecf5ff;
      border: 2px solid #c6e2ff;
      border-radius: 8px;
      font-family: inherit;
      font-size: 28px;
      font-weight: 700;
      line-height: 32px;
      cursor: pointer;
    }
    .table {
      width: 100%;
      table-layout: fixed;
      border-collapse: separate;
      border-spacing: 0;
      background: #fff;
    }
    .cell {
      height: 59px;
      padding: 3px 16px 0;
      border-bottom: 2px solid #ebeef5;
      text-align: left;
      font-weight: 400;
    }
    .head {
      color: #909399;
      font-weight: 700;
    }
    .count {
      font-weight: 700;
    }
    .hover {
      background: #f5f7fa;
    }
    .sort {
      display: inline-flex;
      align-items: center;
      gap: 14px;
      padding: 0;
      color: inherit;
      background: none;
      border: 0;
      font: inherit;
      cursor: pointer;
    }
    .caret {
      width: 20px;
      height: 24px;
      fill: #a8abb2;
    }
    .shade {
      position: absolute;
      left: 0;
      right: 0;
      bottom: 0;
      height: 80px;
      overflow: hidden;
      pointer-events: none;
    }
    .shade::after {
      content: "";
      position: absolute;
      top: 100%;
      left: 16%;
      right: 15%;
      height: 200px;
      box-shadow: 0 0 80px rgba(0, 0, 0, 0.24);
    }
  `;

  @state() private rebirths: Rebirth[] = [{ index: 1, region: "北美洲", country: "美国" }];
  @state() private sortKey: SortKey = "index";
  @state() private descending = false;

  private count(region: string): number {
    return this.rebirths.filter((r) => r.region === region).length;
  }

  private sortBy(key: SortKey) {
    this.descending = this.sortKey === key ? !this.descending : false;
    this.sortKey = key;
  }

  private reborn() {
    this.rebirths = [
      ...this.rebirths,
      { index: this.rebirths.length + 1, region: "北美洲", country: "美国" },
    ];
  }

  private renderTotals() {
    const row = (names: string[]) => html`
      <tr>
        ${names.map((n) => html`<th class="cell head" scope="col">${n}</th>`)}
      </tr>
    `;
    const values = (items: number[], extra = "") => html`
      <tr class=${extra}>
        ${items.map((v) => html`<td class="cell count">${v}</td>`)}
      </tr>
    `;
    return html`
      <table class="table">
        <tbody>
          ${row(["重生次数", "非洲", "欧洲", "亚洲"])}
          ${values(
            [this.rebirths.length, this.count("非洲"), this.count("欧洲"), this.count("亚洲")],
            "hover",
          )}
          ${row(["北美洲", "南美洲", "大洋洲", "南极洲"])}
          ${values(["北美洲", "南美洲", "大洋洲", "南极洲"].map((n) => this.count(n)))}
        </tbody>
      </table>
    `;
  }

  private renderHistory() {
    const columns: [SortKey, string][] = [
      ["index", "重生次数"],
      ["region", "地区"],
      ["country", "国家"],
    ];
    const sign = this.descending ? -1 : 1;
    const rows = [...this.rebirths].sort((a, b) =>
      a[this.sortKey] < b[this.sortKey] ? -sign : a[this.sortKey] > b[this.sortKey] ? sign : 0,
    );
    return html`
      <table class="table">
        <thead>
          <tr>
            ${columns.map(
              ([key, label]) => html`
                <th class="cell head" scope="col">
                  <button class="sort" type="button" @click=${() => this.sortBy(key)}>
                    ${label}
                    <svg class="caret" viewBox="0 0 20 24" aria-hidden="true">
                      <path d="M10 0L20 10H0ZM10 24L0 14H20Z"></path>
                    </svg>
                  </button>
                </th>
              `,
            )}
          </tr>
        </thead>
        <tbody>
          ${rows.map(
            (r) => html`
              <tr>
                <td class="cell">${r.index}</td>
                <td class="cell">${r.region}</td>
                <td class="cell">${r.country}</td>
              </tr>
            `,
          )}
        </tbody>
      </table>
    `;
  }

  render() {
    return html`
      <header class="header">
        <a class="brand" href="#">Reborn</a>
        <a class="link" href="#github">Github</a>
      </header>
      <main class="main">
        <world-map></world-map>
        <button class="reborn" type="button" @click=${this.reborn}>重生</button>
        ${this.renderTotals()} ${this.renderHistory()}
      </main>
      <div class="shade"></div>
    `;
  }
}
